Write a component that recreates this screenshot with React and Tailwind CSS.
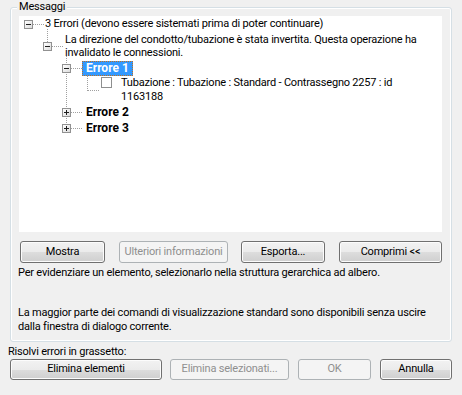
import React from "react";

const FONT = { fontFamily: 'Roboto, "Liberation Sans", Arial, sans-serif' };

function ExpandBox({ open }) {
  return (
    <div className="relative w-[9px] h-[9px] shrink-0 border border-[#919191] bg-gradient-to-br from-white to-[#dcdcdc]">
      <div className="absolute left-[1px] top-[3px] w-[5px] h-[1px] bg-[#1e1e1e]" />
      {!open && <div className="absolute left-[3px] top-[1px] w-[1px] h-[5px] bg-[#1e1e1e]" />}
    </div>
  );
}

function Btn({ children, w, disabled, className = "" }) {
  return (
    <div
      className={
        "h-full flex items-center justify-center rounded-[3px] border text-[11px] " +
        (disabled
          ? "border-[#adb2b5] bg-[#f4f4f4] text-[#8f8f8f] "
          : "border-[#707070] bg-[linear-gradient(to_bottom,#f2f2f2_0%,#ebebeb_50%,#dddddd_50%,#cfcfcf_100%)] shadow-[inset_0_0_0_1px_#fcfcfc] text-black ") +
        className
      }
      style={{ width: w }}
    >
      {children}
    </div>
  );
}

function TreeLines() {
  const c = "#a0a0a0";
  const L = (x1, y1, x2, y2, k) => (
    <line key={k} x1={x1} y1={y1} x2={x2} y2={y2} stroke={c} strokeWidth="1" strokeDasharray="1 1" shapeRendering="crispEdges" />
  );
  return (
    <svg className="absolute inset-0 pointer-events-none" width="423" height="216">
      {L(14, 8.5, 25, 8.5, "h1")}
      {L(28.5, 13, 28.5, 27, "v1")}
      {L(33, 30.5, 45, 30.5, "h2")}
      {L(47.5, 40, 47.5, 113, "v2")}
      {L(52, 52.5, 63, 52.5, "h3")}
      {L(52, 96.5, 63, 96.5, "h4")}
      {L(52, 112.5, 63, 112.5, "h5")}
      {L(68.5, 60, 68.5, 74.5, "v3")}
      {L(68.5, 74.5, 81, 74.5, "h6")}
    </svg>
  );
}

export default function App() {
  return (
    <div className="w-[462px] h-[395px] bg-[#f0f0f0] overflow-hidden text-[11px] tracking-[-0.2px] text-black" style={FONT}>
      <div className="pt-[7px] px-[10px]">
        <div className="relative h-[335px] border border-[#d5dfe5] rounded-[3px] shadow-[inset_0_0_0_1px_#ffffff] pt-[8px] pl-[8px] pr-[9px]">
          <span className="absolute -top-[8px] left-[6px] px-[2px] bg-[#f0f0f0] leading-[14px]">Messaggi</span>

          <div className="relative h-[216px] bg-white">
            <TreeLines />
            <div className="relative flex flex-col">
              <div className="h-[16px] flex items-center pl-[5px]">
                <ExpandBox open />
                <span className="ml-[12px] leading-[14px] whitespace-nowrap">3 Errori (devono essere sistemati prima di poter continuare)</span>
              </div>
              <div className="h-[28px] flex items-center pl-[24px]">
                <ExpandBox open />
                <div className="ml-[13px] leading-[13px] whitespace-nowrap">
                  <div>La direzione del condotto/tubazione è stata invertita. Questa operazione ha</div>
                  <div>invalidato le connessioni.</div>
                </div>
              </div>
              <div className="h-[16px] flex items-center pl-[43px]">
                <ExpandBox open />
                <span className="ml-[11px] h-[15px] px-[3px] flex items-center text-[12px] tracking-normal font-bold text-white bg-[#3399ff] border border-dotted border-[#c07020] leading-[13px]">Errore 1</span>
              </div>
              <div className="h-[28px] flex items-start pl-[82px] pt-[1px]">
                <div className="w-[11px] h-[11px] shrink-0 border border-[#8e8f8f] bg-white" />
                <div className="ml-[9px] leading-[14px] -mt-[1px] whitespace-nowrap">
                  <div>Tubazione : Tubazione : Standard - Contrassegno 2257 : id</div>
                  <div>1163188</div>
                </div>
              </div>
              <div className="h-[16px] flex items-center pl-[43px]">
                <ExpandBox />
                <span className="ml-[15px] text-[12px] tracking-normal font-bold leading-[14px]">Errore 2</span>
              </div>
              <div className="h-[16px] flex items-center pl-[43px]">
                <ExpandBox />
                <span className="ml-[15px] text-[12px] tracking-normal font-bold leading-[14px]">Errore 3</span>
              </div>
            </div>
          </div>

          <div className="mt-[9px] ml-[1px] h-[22px] flex">
            <Btn w={85}>Mostra</Btn>
            <Btn w={109} disabled className="ml-[14px]">Ulteriori informazioni</Btn>
            <Btn w={84} className="ml-[13px]">Esporta...</Btn>
            <Btn w={103} className="ml-[14px]">Comprimi &lt;&lt;</Btn>
          </div>

          <div className="mt-[3px] -ml-[1px] leading-[14px]">
            Per evidenziare un elemento, selezionarlo nella struttura gerarchica ad albero.
          </div>
          <div className="mt-[26px] -ml-[1px] leading-[14px]">
            <div>La maggior parte dei comandi di visualizzazione standard sono disponibili senza uscire</div>
            <div>dalla finestra di dialogo corrente.</div>
          </div>
        </div>
      </div>

      <div className="mt-[3px] pl-[8px] leading-[14px]">Risolvi errori in grassetto:</div>
      <div className="pl-[10px] h-[21px] flex">
        <Btn w={152}>Elimina elementi</Btn>
        <Btn w={119} disabled className="ml-[8px]">Elimina selezionati...</Btn>
        <Btn w={73} disabled className="ml-[9px]">OK</Btn>
        <Btn w={72} className="ml-[9px]">Annulla</Btn>
      </div>
    </div>
  );
}
